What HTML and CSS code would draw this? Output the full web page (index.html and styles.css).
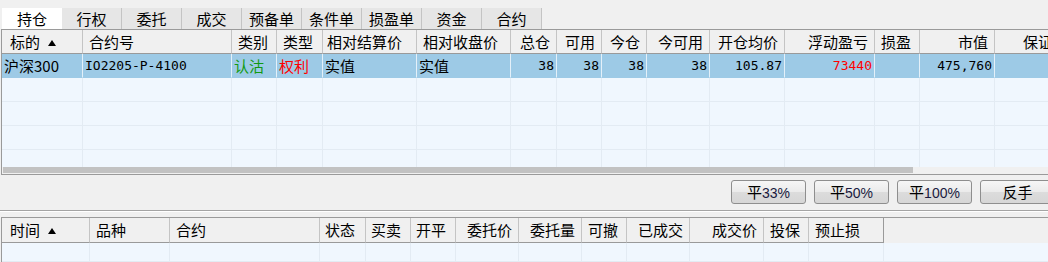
FILE: index.html
```html
<!DOCTYPE html>
<html lang="zh-CN">
<head>
  <meta charset="UTF-8" />
  <title>持仓</title>
  <link rel="stylesheet" href="styles.css">
</head>
<body>
  <div class="tabs">
    <div class="tab active">持仓</div>
    <div class="tab">行权</div>
    <div class="tab">委托</div>
    <div class="tab">成交</div>
    <div class="tab">预备单</div>
    <div class="tab">条件单</div>
    <div class="tab">损盈单</div>
    <div class="tab">资金</div>
    <div class="tab">合约</div>
  </div>

  <div class="panel positions">
    <div class="grid-body">
      <div class="row head pos-cols">
        <div class="th">标的<span class="sort"></span></div>
        <div class="th">合约号</div>
        <div class="th">类别</div>
        <div class="th">类型</div>
        <div class="th tight">相对结算价</div>
        <div class="th">相对收盘价</div>
        <div class="th r">总仓</div>
        <div class="th r">可用</div>
        <div class="th r">今仓</div>
        <div class="th r">今可用</div>
        <div class="th r">开仓均价</div>
        <div class="th r">浮动盈亏</div>
        <div class="th">损盈</div>
        <div class="th r">市值</div>
        <div class="th r">保证金</div>
      </div>
      <div class="row selected pos-cols">
        <div class="td cn">沪深300</div>
        <div class="td">IO2205-P-4100</div>
        <div class="td cn green">认沽</div>
        <div class="td cn red">权利</div>
        <div class="td cn">实值</div>
        <div class="td cn">实值</div>
        <div class="td r">38</div>
        <div class="td r">38</div>
        <div class="td r">38</div>
        <div class="td r">38</div>
        <div class="td r">105.87</div>
        <div class="td r red">73440</div>
        <div class="td"></div>
        <div class="td r">475,760</div>
        <div class="td"></div>
      </div>
      <div class="row empty pos-cols">
        <div class="td"></div><div class="td"></div><div class="td"></div><div class="td"></div><div class="td"></div>
        <div class="td"></div><div class="td"></div><div class="td"></div><div class="td"></div><div class="td"></div>
        <div class="td"></div><div class="td"></div><div class="td"></div><div class="td"></div><div class="td"></div>
      </div>
      <div class="row empty pos-cols">
        <div class="td"></div><div class="td"></div><div class="td"></div><div class="td"></div><div class="td"></div>
        <div class="td"></div><div class="td"></div><div class="td"></div><div class="td"></div><div class="td"></div>
        <div class="td"></div><div class="td"></div><div class="td"></div><div class="td"></div><div class="td"></div>
      </div>
      <div class="row empty pos-cols">
        <div class="td"></div><div class="td"></div><div class="td"></div><div class="td"></div><div class="td"></div>
        <div class="td"></div><div class="td"></div><div class="td"></div><div class="td"></div><div class="td"></div>
        <div class="td"></div><div class="td"></div><div class="td"></div><div class="td"></div><div class="td"></div>
      </div>
      <div class="row empty pos-cols">
        <div class="td"></div><div class="td"></div><div class="td"></div><div class="td"></div><div class="td"></div>
        <div class="td"></div><div class="td"></div><div class="td"></div><div class="td"></div><div class="td"></div>
        <div class="td"></div><div class="td"></div><div class="td"></div><div class="td"></div><div class="td"></div>
      </div>
    </div>
    <div class="hscroll"><div class="thumb"></div></div>
  </div>

  <div class="actions">
    <button class="btn">平<span class="pct">33%</span></button>
    <button class="btn">平<span class="pct">50%</span></button>
    <button class="btn">平<span class="pct">100%</span></button>
    <button class="btn">反手</button>
  </div>

  <div class="splitter"></div>

  <div class="panel orders">
    <div class="row head order-cols">
      <div class="th">时间<span class="sort"></span></div>
      <div class="th">品种</div>
      <div class="th">合约</div>
      <div class="th narrow">状态</div>
      <div class="th narrow">买卖</div>
      <div class="th narrow">开平</div>
      <div class="th r">委托价</div>
      <div class="th r">委托量</div>
      <div class="th">可撤</div>
      <div class="th r">已成交</div>
      <div class="th r">成交价</div>
      <div class="th">投保</div>
      <div class="th">预止损</div>
      <div class="filler"></div>
    </div>
    <div class="row empty short order-cols">
      <div class="td"></div><div class="td"></div><div class="td"></div><div class="td"></div><div class="td"></div>
      <div class="td"></div><div class="td"></div><div class="td"></div><div class="td"></div><div class="td"></div>
      <div class="td"></div><div class="td"></div><div class="td"></div><div class="td last"></div>
    </div>
  </div>
</body>
</html>
```

FILE: styles.css
```css
body {
  margin: 0;
  width: 1048px;
  height: 262px;
  overflow: hidden;
  background: #f0f0f0;
  color: #000;
  font-family: "Noto Sans CJK SC", sans-serif;
  font-size: 15px;
}

/* tab strip */
.tabs {
  display: flex;
  margin-left: 2px;
  padding-top: 8px;
}
.tab {
  box-sizing: border-box;
  width: 60px;
  height: 21px;
  line-height: 21px;
  text-align: center;
  background: #e6e6e6;
  border-right: 1px solid #c4c4c4;
}
.tab.active {
  background: #fff;
  border-right: none;
}

/* bordered list panels */
.panel {
  margin-left: 1px;
  width: 1070px;
  border: 1px solid #9a9a9a;
  background: #f0f7fe;
}
.grid-body {
  height: 137px;
  overflow: hidden;
}
.row {
  display: grid;
}
.pos-cols {
  grid-template-columns: 81px 149px 45px 46px 94px 94px 46px 45px 45px 63px 75px 90px 45px 75px 80px;
}
.order-cols {
  grid-template-columns: 88px 80px 150px 46px 45px 45px 63px 63px 45px 63px 74px 45px 75px 1fr;
}

.th {
  box-sizing: border-box;
  height: 24px;
  line-height: 23px;
  padding: 0 6px;
  white-space: nowrap;
  overflow: hidden;
  background: #f0f0f0;
  border-right: 1px solid #c4c4c4;
  border-bottom: 1px solid #9a9a9a;
}
.th:first-child {
  padding-left: 8px;
}
.th.tight {
  padding-left: 4px;
}
.th.narrow {
  padding-left: 5px;
}
.orders .th {
  height: 25px;
  line-height: 24px;
}
.orders .th:nth-child(13) {
  border-right-color: #9a9a9a;
}
.filler {
  background: #f0f0f0;
}
.sort {
  display: inline-block;
  margin-left: 8px;
  vertical-align: 2px;
  border-left: 4px solid transparent;
  border-right: 4px solid transparent;
  border-bottom: 6px solid #000;
}

.td {
  box-sizing: border-box;
  height: 24px;
  line-height: 23px;
  padding: 0 2px;
  white-space: nowrap;
  overflow: hidden;
  font-family: "DejaVu Sans Mono", monospace;
  font-size: 13px;
  border-right: 1px solid #e3ebf3;
  border-bottom: 1px solid #e3ebf3;
}
.td.cn {
  font-family: "Noto Sans CJK SC", sans-serif;
  font-size: 15px;
}
.td.last {
  border-right: none;
}
.short .td {
  height: 19px;
}
.r {
  text-align: right;
}
.selected .td {
  background: #9dcae6;
  border-right-color: #e4f0f9;
  border-bottom-color: #9dcae6;
}
.green {
  color: #119911;
}
.red {
  color: #ff0000;
}

.hscroll {
  height: 7px;
  background: #f0f0f0;
}
.thumb {
  width: 910px;
  height: 6px;
  margin-left: 1px;
  background: #c2c2c2;
}

/* close position buttons */
.actions {
  display: flex;
  justify-content: flex-end;
  gap: 8px;
  margin-top: 5px;
  margin-right: -7px;
}
.btn {
  box-sizing: border-box;
  width: 75px;
  height: 24px;
  padding: 0;
  border: 1px solid #8e8e8e;
  border-radius: 3px;
  background: linear-gradient(to bottom, #f6f6f6 0%, #ebebeb 48%, #dcdcdc 52%, #d6d6d6 100%);
  font-family: "Noto Sans CJK SC", sans-serif;
  font-size: 15px;
  line-height: 22px;
  color: #000;
}
.pct {
  font-family: "Liberation Sans", sans-serif;
  font-size: 14px;
  color: #1a1a40;
}

.splitter {
  margin-top: 6px;
  border-top: 1px solid #a4a4a4;
  border-bottom: 1px solid #fff;
}
.orders {
  margin-top: 5px;
  border-bottom: none;
}
```
